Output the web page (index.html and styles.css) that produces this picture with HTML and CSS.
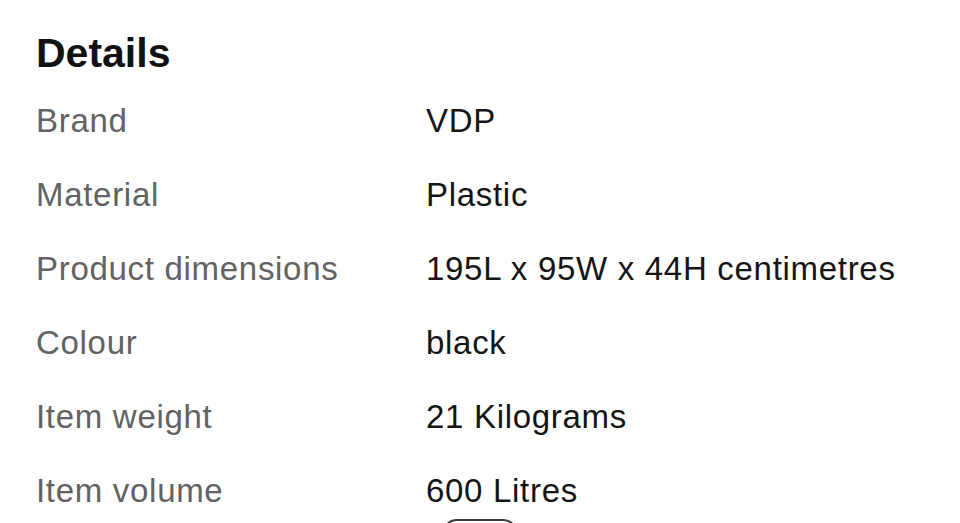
FILE: index.html
```html
<!DOCTYPE html>
<html lang="en">
<head>
<meta charset="utf-8">
<title>Details</title>
<link rel="stylesheet" href="styles.css">
</head>
<body>
<section class="details">
  <h2 class="details-title">Details</h2>
  <dl class="details-list">
    <div class="row"><dt>Brand</dt><dd>VDP</dd></div>
    <div class="row"><dt>Material</dt><dd>Plastic</dd></div>
    <div class="row"><dt>Product dimensions</dt><dd>195L x 95W x 44H centimetres</dd></div>
    <div class="row"><dt>Colour</dt><dd>black</dd></div>
    <div class="row"><dt>Item weight</dt><dd>21 Kilograms</dd></div>
    <div class="row"><dt>Item volume</dt><dd>600 Litres</dd></div>
  </dl>
  <div class="more-wrap"><span class="more-pill"></span></div>
</section>
</body>
</html>
```
FILE: styles.css
```css
html, body {
  margin: 0;
  padding: 0;
  background: #ffffff;
  overflow: hidden;
}
body {
  font-family: "Liberation Sans", Arial, Helvetica, sans-serif;
  color: #111111;
}
.details {
  padding: 29px 0 0 36px;
}
.details-title {
  margin: 0;
  font-size: 41px;
  line-height: 48px;
  font-weight: 700;
  color: #111111;
}
.details-list {
  margin: 7px 0 0 0;
  padding: 0;
}
.row {
  display: grid;
  grid-template-columns: 390px 1fr;
  height: 74px;
  align-items: center;
}
.row dt,
.row dd {
  margin: 0;
  font-size: 33px;
  line-height: 40px;
  letter-spacing: 0.7px;
}
.row dt {
  color: #626262;
}
.row dd {
  color: #151515;
}
.more-wrap {
  margin-top: -9px;
  padding-left: 406px;
}
.more-pill {
  display: block;
  width: 76px;
  height: 30px;
  border: 2px solid #3a3a3a;
  border-radius: 16px;
  box-sizing: border-box;
}
```
